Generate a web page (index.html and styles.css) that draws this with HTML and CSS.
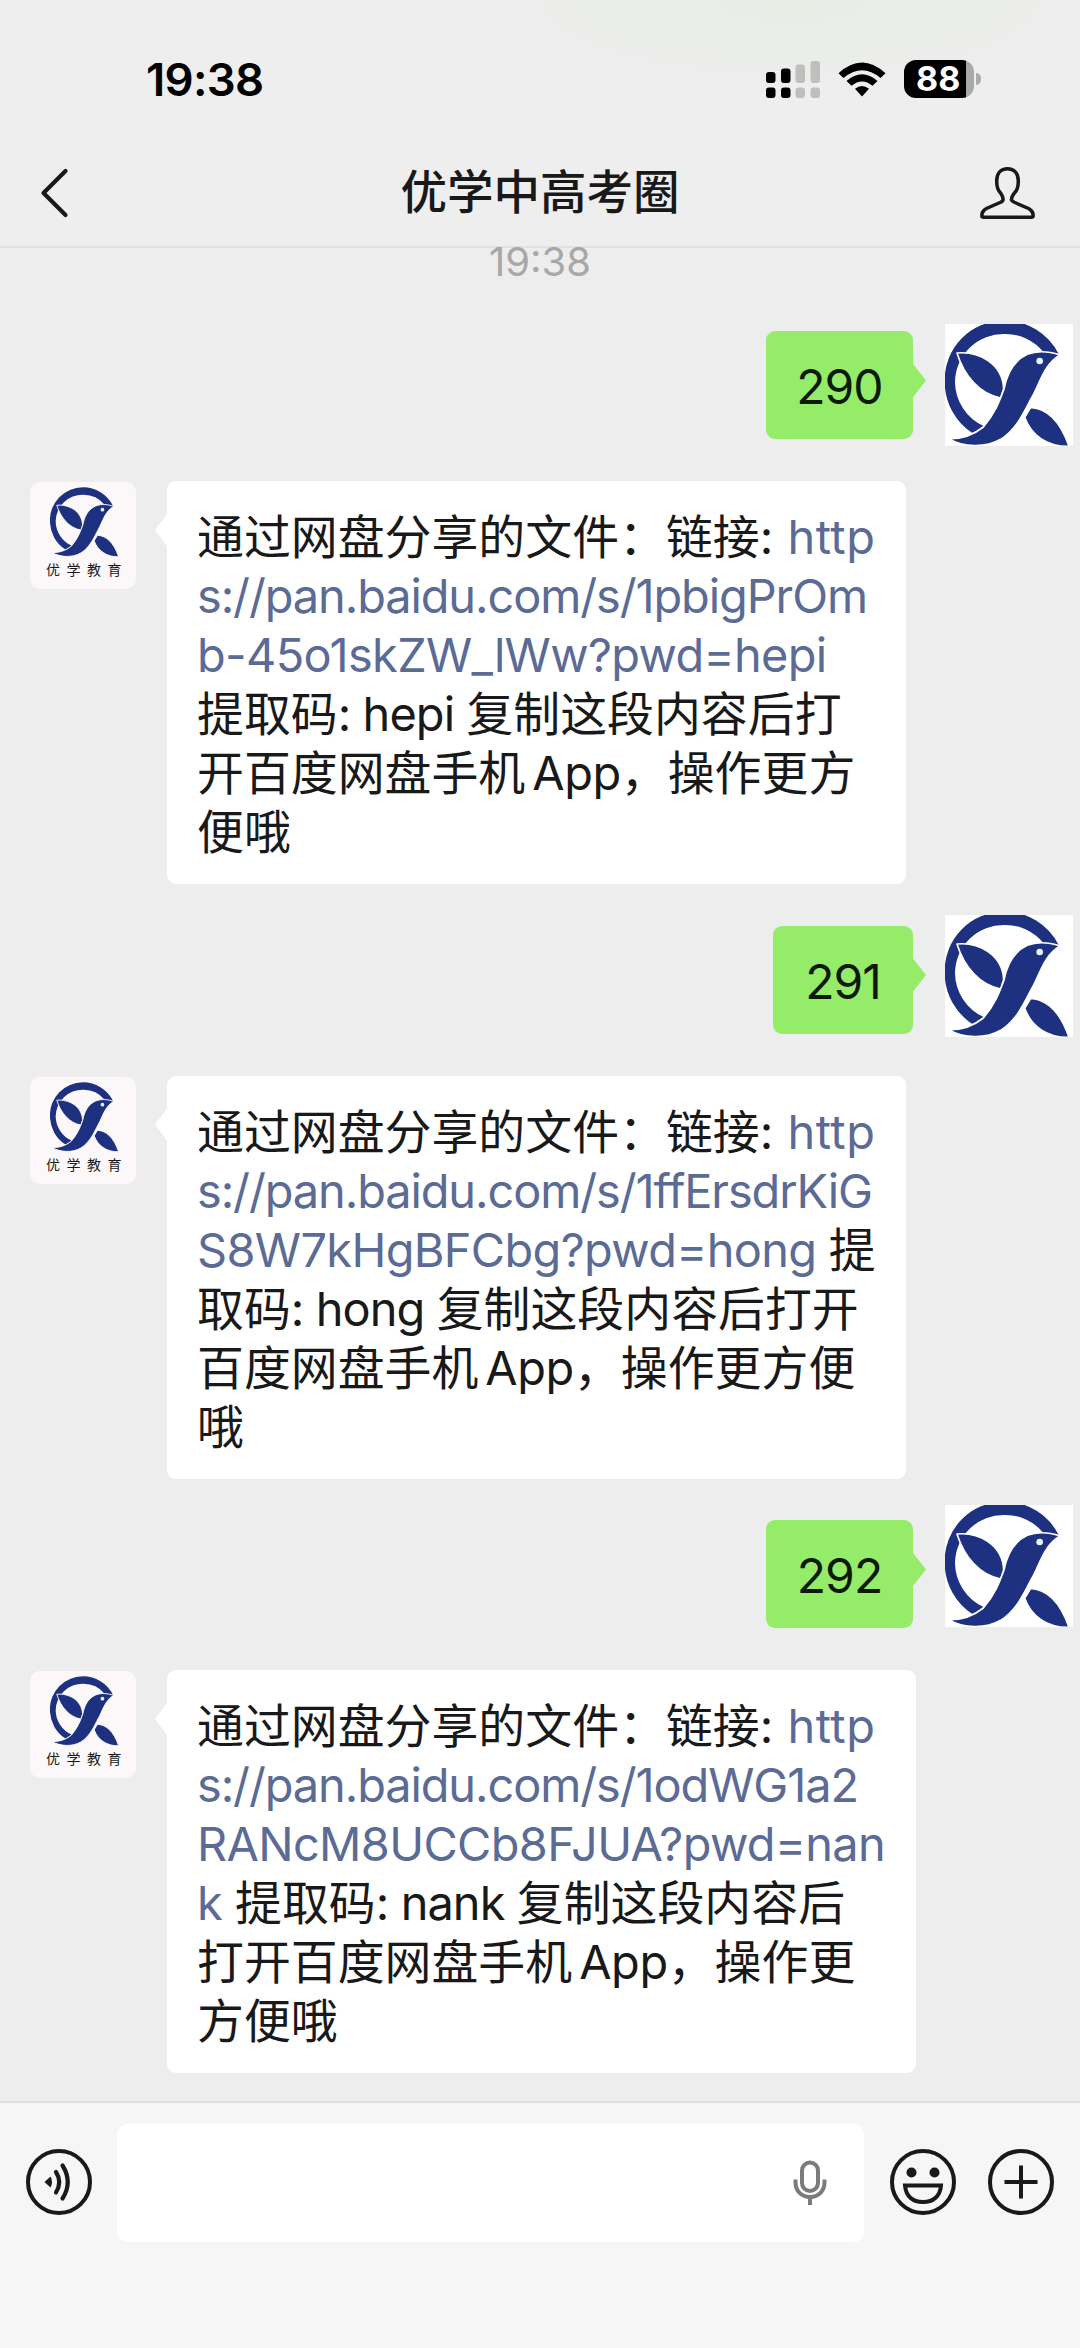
FILE: index.html
```html
<!DOCTYPE html>
<html lang="zh-CN">
<head>
<meta charset="utf-8">
<title>优学中高考圈</title>
<link rel="stylesheet" href="styles.css">
</head>
<body>
<svg class="defs" width="0" height="0" aria-hidden="true">
  <g id="bird">
    <path fill="#1d3180" d="M386 132A181 181 0 0 0 222 32A178 178 0 0 0 44 214A184 184 0 0 0 130 371L161 348A147 147 0 0 1 75 216A146 146 0 0 1 225 72A146 146 0 0 1 341 127Z"/>
    <g fill="#1d3180" stroke="#fff" stroke-width="5" stroke-linejoin="round">
      <path d="M81 129C145 123 218 160 221 237L212 264C150 252 103 200 81 129Z"/>
      <path d="M390 135C360 125 325 120 292 133C250 152 231 190 222 237C208 275 195 310 160 351C130 375 95 387 56 386C100 412 165 415 212 388C262 357 285 300 305 263C330 220 340 165 390 135Z"/>
      <path d="M302 292C350 295 390 330 417 409C350 410 303 375 284 322Z"/>
    </g>
    <circle cx="329" cy="153" r="10" fill="#e6f6fb"/>
  </g>
</svg>
<div class="screen">
  <header class="top">
    <div class="status">
      <span class="clock">19:38</span>
      <svg class="signal" width="56" height="38" viewBox="0 0 56 38">
        <g fill="#000"><rect x="1" y="11" width="9.500" height="11" rx="3"/><rect x="16" y="7.500" width="9.500" height="14.500" rx="3"/><rect x="1" y="26.500" width="9.500" height="10.500" rx="3"/><rect x="16" y="26.500" width="9.500" height="10.500" rx="3"/></g>
        <g fill="#bdc0bc"><rect x="30.500" y="3.500" width="9.500" height="18.500" rx="3"/><rect x="45.500" y="0" width="9.500" height="22" rx="3"/><rect x="30.500" y="26.500" width="9.500" height="10.500" rx="3"/><rect x="45.500" y="26.500" width="9.500" height="10.500" rx="3"/></g>
      </svg>
      <svg class="wifi" width="48" height="35" viewBox="0 0 48 36" preserveAspectRatio="none">
        <path d="M0.500 11.500Q24-10.500 47.500 11.500L42.500 16.500Q24 0.500 5.500 16.500Z"/>
        <path d="M8.500 19.500Q24 5.500 39.500 19.500L34.500 24.500Q24 15.500 13.500 24.500Z"/>
        <path d="M17 27.500Q24 22 31 27.500L24 35.500Z"/>
      </svg>
      <div class="battery"><span class="cell">88</span><span class="tip"></span></div>
    </div>
    <div class="nav">
      <svg width="30" height="56" viewBox="0 0 30 56"><path d="M25.500 6L3.500 28L25.500 50" fill="none" stroke="#191919" stroke-width="4.200" stroke-linecap="round" stroke-linejoin="round"/></svg>
      <h1>优学中高考圈</h1>
      <svg width="57" height="54" viewBox="0 0 58 58" preserveAspectRatio="none"><path d="M29 3C22 3 18 8 18 16C18 22 19 26 22 29C24 32 24.500 33 24.500 36C24.500 37 24 38 22 39L7 46C4 48 3 49 3 52V54Q3 55 5 55H53Q55 55 55 54V52C55 49 54 48 51 46L36 39C34 38 33 37 33 36C33 33 34 32 36 29C39 26 40 22 40 16C40 8 36 3 29 3Z" fill="none" stroke="#191919" stroke-width="3.600" stroke-linejoin="round"/></svg>
    </div>
  </header>

  <main class="chat">
    <time>19:38</time>
    <div class="sent">
      <div class="bubble green">290</div>
      <svg class="me" viewBox="45 42 384 366"><use href="#bird"/></svg>
    </div>
    <div class="received">
      <div class="avatar"><svg viewBox="45 30 384 380"><use href="#bird"/></svg><span>优学教育</span></div>
      <div class="bubble white">
        <p>通过网盘分享的文件：链接<i class="colon">: </i><a class="http">http</a></p>
        <p><a class="path">s://pan.baidu.com/s/1pbigPrOm</a></p>
        <p><a class="code a">b-45o1skZW_lWw?pwd=hepi</a></p>
        <p>提取码<i>: hepi </i>复制这段内容后打</p>
        <p>开百度网盘手机<i class="app">App</i>，操作更方</p>
        <p>便哦</p>
      </div>
    </div>
    <div class="sent">
      <div class="bubble green narrow">291</div>
      <svg class="me second" viewBox="45 42 384 366"><use href="#bird"/></svg>
    </div>
    <div class="received">
      <div class="avatar"><svg viewBox="45 30 384 380"><use href="#bird"/></svg><span>优学教育</span></div>
      <div class="bubble white">
        <p>通过网盘分享的文件：链接<i class="colon">: </i><a class="http">http</a></p>
        <p><a class="path">s://pan.baidu.com/s/1ffErsdrKiG</a></p>
        <p><a class="code">S8W7kHgBFCbg?pwd=hong</a><i> </i>提</p>
        <p>取码<i>: hong </i>复制这段内容后打开</p>
        <p>百度网盘手机<i class="app">App</i>，操作更方便</p>
        <p>哦</p>
      </div>
    </div>
    <div class="sent">
      <div class="bubble green">292</div>
      <svg class="me third" viewBox="45 42 384 366"><use href="#bird"/></svg>
    </div>
    <div class="received last">
      <div class="avatar"><svg viewBox="45 30 384 380"><use href="#bird"/></svg><span>优学教育</span></div>
      <div class="bubble white wide">
        <p>通过网盘分享的文件：链接<i class="colon">: </i><a class="http">http</a></p>
        <p><a class="path">s://pan.baidu.com/s/1odWG1a2</a></p>
        <p><a class="code">RANcM8UCCb8FJUA?pwd=nan</a></p>
        <p><a>k</a><i> </i>提取码<i>: nank </i>复制这段内容后</p>
        <p>打开百度网盘手机<i class="app">App</i>，操作更</p>
        <p>方便哦</p>
      </div>
    </div>
  </main>

  <footer class="composer">
    <svg width="68" height="68" viewBox="0 0 68 68"><circle cx="34" cy="34" r="31" fill="none" stroke="#191919" stroke-width="4"/><path d="M19.500 34L25.500 28.500Q28.500 34 25.500 39.500Z" fill="#191919"/><path d="M31 24Q37.500 34 31 44.500M37.500 17.500Q48 34 37.500 50.500" fill="none" stroke="#191919" stroke-width="4.200" stroke-linecap="round"/></svg>
    <div class="field">
      <svg width="34" height="46" viewBox="0 0 34 46"><rect x="9" y="2.500" width="16" height="28.500" rx="8" fill="none" stroke="#7b7b7b" stroke-width="4"/><path d="M2.500 19.500V22C2.500 31 8.500 37 17 37S31.500 31 31.500 22V19.500M17 37V45" fill="none" stroke="#7b7b7b" stroke-width="4"/></svg>
    </div>
    <svg width="68" height="68" viewBox="0 0 68 68"><circle cx="34" cy="34" r="31" fill="none" stroke="#191919" stroke-width="4"/><circle cx="22.500" cy="24.500" r="5" fill="#191919"/><circle cx="45.500" cy="24.500" r="5" fill="#191919"/><path d="M16 37.500H52C51 48.500 44 54 34 54S17 48.500 16 37.500Z" fill="none" stroke="#191919" stroke-width="4"/></svg>
    <svg width="68" height="68" viewBox="0 0 68 68"><circle cx="34" cy="34" r="31" fill="none" stroke="#191919" stroke-width="4"/><path d="M34 17.500V50.500M17.500 34H50.500" fill="none" stroke="#191919" stroke-width="4"/></svg>
  </footer>
</div>
</body>
</html>
```
FILE: styles.css
```css
* { box-sizing: border-box; }
body { margin: 0; background: #ededed; font-family: Inter, "Noto Sans CJK SC", sans-serif; color: #191919; }
svg { display: block; flex: none; }
.defs { position: absolute; }
.screen { width: 1080px; height: 2348px; display: flex; flex-direction: column; overflow: hidden; }

.top { flex: none; height: 248px; border-bottom: 2px solid #e1e1e1; background: radial-gradient(340px 100px at 790px 0, #e8ede6, transparent), #eeeeee; }
.status { height: 154px; padding: 0 99px 0 146px; display: flex; align-items: flex-start; }
.clock { margin: 52px auto 0 0; font-size: 45.500px; line-height: 56px; font-weight: 600; letter-spacing: -0.7px; color: #000; }
.signal { margin: 61px 17px 0 0; }
.wifi { margin: 62px 18px 0 0; }
.battery { display: flex; align-items: center; gap: 2px; margin-top: 60px; }
.cell { width: 70px; height: 38px; border-radius: 12px; background: linear-gradient(90deg, #000 62px, #a9a9a9 62px); color: #fff; font-size: 34px; line-height: 38px; font-weight: 700; padding-left: 12px; }
.tip { width: 5px; height: 12px; border-radius: 0 6px 6px 0; background: #ababab; }
.nav { height: 78px; display: flex; align-items: center; justify-content: space-between; padding: 0 44px 0 40px; }
h1 { margin: -3px 0 0 31px; font-size: 46.5px; line-height: 60px; font-weight: 500; white-space: nowrap; }

.chat { flex: none; height: 1853px; display: flex; flex-direction: column; }
time { align-self: center; height: 83px; font-size: 40px; line-height: 28px; color: #a8a8a8; }
.sent { display: flex; justify-content: flex-end; height: 150px; padding-right: 7px; }
.received { display: flex; gap: 31px; height: 444.5px; padding-left: 30px; }
.last { height: 403px; }
.bubble { position: relative; border-radius: 9px; font-size: 46.9px; }
.green { width: 147px; height: 108px; margin-right: 32px; text-align: center; background: #95ec69; font-size: 48px; letter-spacing: -1px; line-height: 111px; color: #0d1a08; }
.narrow { width: 140px; }
.white { width: 739px; height: 403px; padding: 24px 0 0 30px; background: #fff; }
.wide { width: 749px; }
.bubble::after { content: ""; position: absolute; background: inherit; }
.green::after { left: 100%; top: 33px; width: 13px; height: 33px; clip-path: polygon(0 0, 100% 50%, 0 100%); }
.white::after { right: 100%; top: 33px; width: 12px; height: 32px; clip-path: polygon(100% 0, 0 50%, 100% 100%); }
.me { width: 128px; height: 122px; margin-top: -7px; background: #fff; }
.second { margin-top: -11px; }
.third { margin-top: -15px; }
.avatar { width: 106px; height: 107px; margin-top: 1px; border-radius: 10px; background: #fcf8f9; display: flex; flex-direction: column; align-items: center; padding-top: 5px; }
.avatar svg { width: 71px; height: 70px; margin-left: 4px; }
.avatar span { font-size: 14px; line-height: 18px; letter-spacing: 6.5px; margin: 4px -8px 0 0; }
.white p { margin: 0; height: 59.1px; line-height: 64px; white-space: pre; }
.white i { font-style: normal; letter-spacing: -0.9px; }
.white a { color: #5b6b95; }
.white .colon { letter-spacing: 0.5px; }
.http { letter-spacing: 0.5px; }
.path { letter-spacing: -1.08px; }
.code { letter-spacing: -0.63px; }
.white .app { margin-left: 7px; letter-spacing: -0.4px; }

.composer { flex: none; height: 247px; border-top: 2px solid #dedede; background: #f6f6f6; display: flex; align-items: flex-start; padding: 21px 25px 0; }
.composer > svg { margin-top: 24px; }
.composer > svg:last-child { margin-left: 30px; }
.field { width: 747px; height: 118px; margin: 0 25px 0 24px; border-radius: 10px; background: #fff; display: flex; align-items: center; justify-content: flex-end; padding-right: 37px; }
```
